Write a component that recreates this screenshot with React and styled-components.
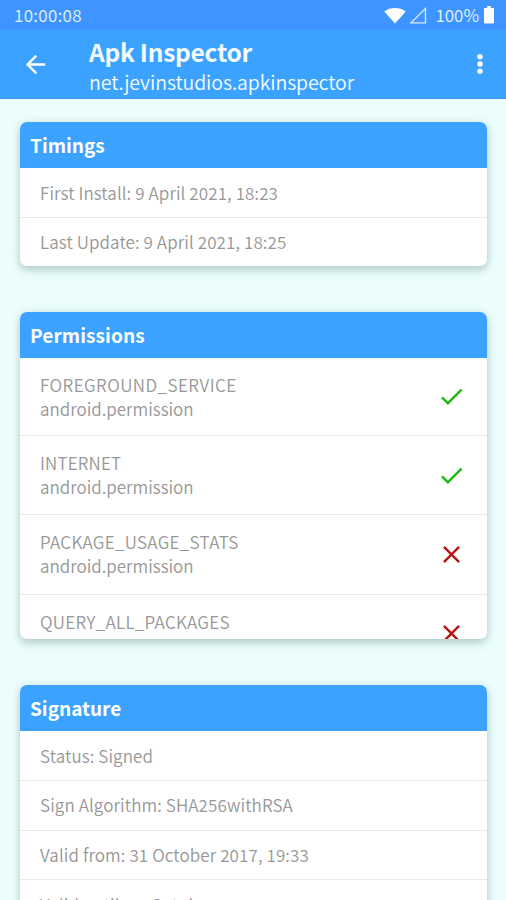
import React from "react";
import styled, { createGlobalStyle } from "styled-components";

const GlobalStyle = createGlobalStyle`
  * { box-sizing: border-box; }
  html, body { margin: 0; height: 100%; overflow: hidden; }
  body { background: #ebfefd; }
`;

const Screen = styled.div`
  width: 506px;
  height: 900px;
  overflow: hidden;
  display: flex;
  flex-direction: column;
  background: #ebfefd;
  font-family: "Noto Sans CJK SC", "Open Sans", sans-serif;
`;

const StatusBar = styled.div`
  flex: none;
  height: 30px;
  padding: 0 11px 0 14px;
  display: flex;
  align-items: center;
  justify-content: space-between;
  background: #3e95ff;
  color: #e4f3ff;
`;

const StatusGroup = styled.div`
  display: flex;
  align-items: center;
`;

const Line = styled.span`
  display: block;
  white-space: nowrap;
  font-size: ${(p) => p.$size || 17}px;
  font-weight: ${(p) => p.$weight || 350};
  line-height: ${(p) => p.$lh || 24}px;
  letter-spacing: ${(p) => p.$track || 0}px;
`;

const StatusIcon = styled.svg`
  display: block;
  flex: none;
  margin-right: ${(p) => p.$gap || 0}px;
`;

const AppBar = styled.header`
  flex: none;
  height: 69px;
  padding: 0 16px 0 21px;
  display: flex;
  align-items: center;
  background: #3ba2ff;
  border-bottom: 1px solid #3798f0;
  color: #fff;
`;

const IconButton = styled.button`
  flex: none;
  display: flex;
  padding: 0;
  border: 0;
  background: none;
  color: #fff;
`;

const Titles = styled.div`
  flex: 1;
  margin-left: 39px;
  padding-top: 3px;
  color: #f4fbff;
`;

const Content = styled.main`
  flex: 1;
  min-height: 0;
  padding: 23px 19px 0 20px;
  display: flex;
  flex-direction: column;
  gap: 46px;
`;

const Card = styled.section`
  flex: none;
  height: ${(p) => p.$height}px;
  overflow: hidden;
  border-radius: 7px;
  background: #fff;
  box-shadow: 0 4px 9px rgba(50, 90, 80, 0.27), 0 0 10px rgba(50, 90, 80, 0.08);
`;

const CardHeader = styled.h2`
  margin: 0;
  height: 46px;
  padding: 0 10px;
  display: flex;
  align-items: center;
  background: #3ba2ff;
  color: #fff;
`;

const Row = styled.div`
  height: ${(p) => (p.$tall ? 79.3 : 49.7)}px;
  padding: 0 21px 0 20px;
  display: flex;
  align-items: center;
  justify-content: space-between;
  border-top: 1px solid #e9ebeb;
  color: #979797;
  &:first-of-type {
    height: ${(p) => (p.$tall ? 77 : 49)}px;
    border-top: 0;
  }
`;

const GRANT_PATHS = {
  check: { d: "M9 16.17 4.83 12l-1.42 1.41L9 19 21 7l-1.41-1.41z", color: "#1fb812" },
  cross: {
    d: "M19 6.41 17.59 5 12 10.59 6.41 5 5 6.41 10.59 12 5 17.59 6.41 19 12 13.41 17.59 19 19 17.59 13.41 12z",
    color: "#b91414",
  },
};

function GrantIcon({ granted }) {
  const icon = granted ? GRANT_PATHS.check : GRANT_PATHS.cross;
  return (
    <StatusIcon width="29" height="29" viewBox="0 0 24 24">
      <path d={icon.d} fill={icon.color} />
    </StatusIcon>
  );
}

const timings = ["First Install: 9 April 2021, 18:23", "Last Update: 9 April 2021, 18:25"];

const permissions = [
  { name: "FOREGROUND_SERVICE", granted: true, track: 0.45 },
  { name: "INTERNET", granted: true, track: 0.15 },
  { name: "PACKAGE_USAGE_STATS", granted: false, track: 0.3 },
  { name: "QUERY_ALL_PACKAGES", granted: false, track: 0.3 },
];

const signature = [
  "Status: Signed",
  "Sign Algorithm: SHA256withRSA",
  "Valid from: 31 October 2017, 19:33",
  "Valid until: 31 October 2047, 19:33",
];

function TextCard({ title, rows, height }) {
  return (
    <Card $height={height}>
      <CardHeader><Line $size={19} $weight={700}>{title}</Line></CardHeader>
      {rows.map((text) => (
        <Row key={text}><Line $track={0.1}>{text}</Line></Row>
      ))}
    </Card>
  );
}

export default function App() {
  return (
    <Screen>
      <GlobalStyle />
      <StatusBar>
        <Line $track={0.35}>10:00:08</Line>
        <StatusGroup>
          <StatusIcon $gap={3} width="22" height="17" viewBox="0 0 22 17">
            <path d="M11 16.5 0.3 4.400C6-.2 16-.2 21.700 4.400z" fill="#fff" />
          </StatusIcon>
          <StatusIcon $gap={8} width="18" height="17" viewBox="0 0 18 17">
            <path d="M16.500 1.5v14.300H2z" fill="none" stroke="#d9ecff" strokeWidth="1.3" />
          </StatusIcon>
          <Line>100%</Line>
          <StatusIcon width="16" height="18" viewBox="0 0 16 18">
            <path d="M8.200 0h3.600v2H14a1 1 0 0 1 1 1v13.500a1 1 0 0 1-1 1H6a1 1 0 0 1-1-1V3a1 1 0 0 1 1-1h2.200z" fill="#fff" />
          </StatusIcon>
        </StatusGroup>
      </StatusBar>
      <AppBar>
        <IconButton aria-label="Back">
          <svg width="29" height="29" viewBox="0 0 24 24">
            <path d="M20 11H7.830l5.590-5.590L12 4l-8 8 8 8 1.410-1.410L7.830 13H20z" fill="currentColor" />
          </svg>
        </IconButton>
        <Titles>
          <Line $size={24.5} $weight={700} $lh={31} $track={-0.25}>Apk Inspector</Line>
          <Line $size={19.5} $lh={29} $track={-0.08}>net.jevinstudios.apkinspector</Line>
        </Titles>
        <IconButton aria-label="More options">
          <svg width="20" height="24" viewBox="0 0 20 24">
            <circle cx="10" cy="4.700" r="2.700" fill="currentColor" />
            <circle cx="10" cy="12" r="2.700" fill="currentColor" />
            <circle cx="10" cy="19.300" r="2.700" fill="currentColor" />
          </svg>
        </IconButton>
      </AppBar>
      <Content>
        <TextCard title="Timings" rows={timings} height={144} />
        <Card $height={327}>
          <CardHeader><Line $size={19} $weight={700} $track={0.1}>Permissions</Line></CardHeader>
          {permissions.map((p) => (
            <Row key={p.name} $tall>
              <div>
                <Line $track={p.track}>{p.name}</Line>
                <Line>android.permission</Line>
              </div>
              <GrantIcon granted={p.granted} />
            </Row>
          ))}
        </Card>
        <TextCard title="Signature" rows={signature} height={246} />
      </Content>
    </Screen>
  );
}
